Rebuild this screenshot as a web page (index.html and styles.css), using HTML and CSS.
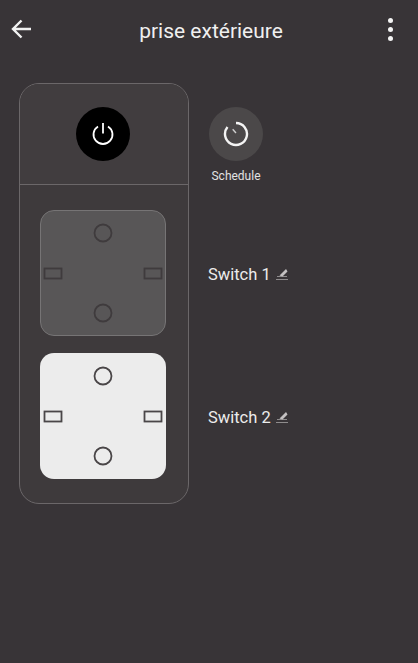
FILE: index.html
```html
<!DOCTYPE html>
<html lang="en">
<head>
    <meta charset="UTF-8">
    <meta name="viewport" content="width=device-width, initial-scale=1.0">
    <title>prise extérieure</title>
    <link rel="stylesheet" href="styles.css">
</head>
<body>
    <header class="topbar">
        <svg class="back" width="24" height="24" viewBox="0 0 24 24">
            <path d="M21 12H3.500M11.500 3.500 3 12l8.500 8.500" fill="none" stroke="#f2f2f2" stroke-width="2.400"/>
        </svg>
        <h1 class="title">prise extérieure</h1>
        <div class="more">
            <span class="dot"></span>
            <span class="dot"></span>
            <span class="dot"></span>
        </div>
    </header>

    <main class="content">
        <section class="panel">
            <div class="panel-top">
                <div class="round-btn power">
                    <svg width="26" height="26" viewBox="0 0 26 26">
                        <path d="M8 5.400a9.500 9.500 0 1 0 10 0M13 2v10.500" fill="none" stroke="#fff" stroke-width="1.800"/>
                    </svg>
                </div>
            </div>
            <div class="panel-plates">
                <div class="plate plate-off">
                    <svg width="126" height="126" viewBox="0 0 126 126">
                        <circle cx="63" cy="23" r="8.500"/>
                        <circle cx="63" cy="103" r="8.500"/>
                        <rect x="4.500" y="58.500" width="17" height="10"/>
                        <rect x="104.500" y="58.500" width="17" height="10"/>
                    </svg>
                </div>
                <div class="plate plate-on">
                    <svg width="126" height="126" viewBox="0 0 126 126">
                        <circle cx="63" cy="23" r="8.500"/>
                        <circle cx="63" cy="103" r="8.500"/>
                        <rect x="4.500" y="58.500" width="17" height="10"/>
                        <rect x="104.500" y="58.500" width="17" height="10"/>
                    </svg>
                </div>
            </div>
        </section>

        <section class="side">
            <div class="schedule">
                <div class="round-btn timer">
                    <svg width="26" height="26" viewBox="0 0 26 26">
                        <path d="M13 2a11 11 0 1 1-8.500 4" fill="none" stroke="#f4f4f4" stroke-width="2.400"/>
                        <path d="M9.700 8.300 13 12" fill="none" stroke="#cfcfcf" stroke-width="1.400"/>
                    </svg>
                </div>
                <span class="schedule-label">Schedule</span>
            </div>
            <div class="switch-row">
                <span class="switch-name">Switch 1</span>
                <svg width="12" height="13" viewBox="0 0 12 13">
                    <path d="M0 11.500h12M1 8.500h10" fill="none" stroke="#8f8c8d" stroke-width="1"/>
                    <path d="M3.500 7.500 10 1l1.500 2.500L6.500 8.500z" fill="#c4c1c2"/>
                </svg>
            </div>
            <div class="switch-row">
                <span class="switch-name">Switch 2</span>
                <svg width="12" height="13" viewBox="0 0 12 13">
                    <path d="M0 11.500h12M1 8.500h10" fill="none" stroke="#8f8c8d" stroke-width="1"/>
                    <path d="M3.500 7.500 10 1l1.500 2.500L6.500 8.500z" fill="#c4c1c2"/>
                </svg>
            </div>
        </section>
    </main>
</body>
</html>
```
FILE: styles.css
```css
* {
    box-sizing: border-box;
}
body {
    margin: 0;
    height: 663px;
    overflow: hidden;
    background: #383437;
    color: #f2f2f2;
    font-family: Roboto, "Liberation Sans", sans-serif;
}
.topbar {
    height: 60px;
    padding: 0 25px 0 10px;
    display: flex;
    align-items: center;
    justify-content: space-between;
}
.back {
    margin-top: -2px;
}
.title {
    margin: 2px 0 0 0;
    font-size: 21px;
    font-weight: 400;
    color: #f0f0f0;
}
.more {
    margin-top: -2px;
    display: flex;
    flex-direction: column;
    gap: 4px;
}
.dot {
    width: 5px;
    height: 5px;
    border-radius: 50%;
    background: #f4f4f4;
}
.content {
    margin-top: 23px;
    padding-left: 19px;
    display: flex;
    gap: 20px;
}
.panel {
    width: 170px;
    height: 421px;
    border: 1px solid #6b6769;
    border-radius: 20px;
    background: #3e3a3c;
    overflow: hidden;
}
.panel-top {
    height: 101px;
    border-bottom: 1px solid #6b6769;
    background: #413d3f;
    padding: 23px 2px 0 0;
    display: flex;
    justify-content: center;
}
.round-btn {
    width: 54px;
    height: 54px;
    border-radius: 50%;
    display: flex;
    align-items: center;
    justify-content: center;
}
.power {
    background: #000;
}
.timer {
    background: #4b4849;
}
.panel-plates {
    padding: 25px 2px 0 0;
    display: flex;
    flex-direction: column;
    align-items: center;
    gap: 17px;
}
.plate {
    width: 126px;
    height: 126px;
    border-radius: 14px;
}
.plate svg {
    display: block;
    fill: none;
    stroke-width: 1.800;
}
.plate-off {
    background: #585657;
    border: 1px solid #767475;
}
.plate-off svg {
    margin: -1px;
    stroke: #3f3b3d;
}
.plate-on {
    background: #ececec;
}
.plate-on svg {
    stroke: #4a4648;
}
.side {
    padding-top: 24px;
    display: flex;
    flex-direction: column;
}
.schedule {
    width: 54px;
    height: 103px;
    display: flex;
    flex-direction: column;
    align-items: center;
}
.schedule-label {
    margin-top: 8px;
    font-size: 12px;
    line-height: 14px;
    color: #e2e2e2;
}
.switch-row {
    height: 126px;
    margin-bottom: 17px;
    margin-left: -1px;
    padding-top: 2px;
    display: flex;
    align-items: center;
    gap: 5px;
}
.switch-name {
    font-size: 16.500px;
    color: #ececec;
}
```
